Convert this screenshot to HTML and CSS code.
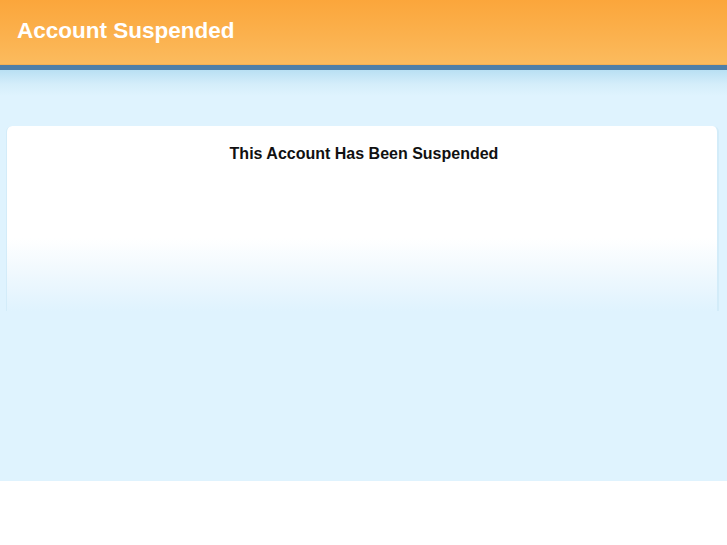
FILE: index.html
```html
<!DOCTYPE html>
<html lang="en">
<head>
    <meta charset="UTF-8">
    <title>Account Suspended</title>
    <link rel="stylesheet" href="styles.css">
</head>
<body>
    <div class="page">
        <div class="header">
            <h1 class="header-title">Account Suspended</h1>
        </div>
        <div class="header-rule"></div>
        <div class="content">
            <div class="panel">
                <h2 class="panel-title">This Account Has Been Suspended</h2>
            </div>
        </div>
    </div>
</body>
</html>
```

FILE: styles.css
```css
* {
    margin: 0;
    padding: 0;
    box-sizing: border-box;
}

body {
    background-color: #fff;
    font-family: 'Liberation Sans', Arial, sans-serif;
}

.page {
    height: 481px;
    background-color: #dff3fe;
    display: flex;
    flex-direction: column;
}

.header {
    height: 65px;
    background: linear-gradient(to bottom, #fba63b 0%, #fbb24f 60%, #fbbb5e 100%);
    border-bottom: 1px solid #f3b055;
    padding: 18px 0 0 17px;
}

.header-title {
    color: #fff;
    font-size: 22.5px;
    font-weight: bold;
    line-height: 26px;
}

.header-rule {
    height: 5px;
    background-color: #4f7fa8;
}

.content {
    flex: 1;
    background: linear-gradient(to bottom, #b9e0f3 0px, #d4edfa 14px, #dff3fe 26px, #dff3fe 100%);
    padding: 56px 8px 0 6px;
}

.panel {
    height: 185px;
    border-radius: 6px 6px 0 0;
    border-left: 1px solid #d3ecf9;
    border-right: 2px solid #d3ecf9;
    background: linear-gradient(to bottom, #ffffff 0px, #ffffff 112px, #f3fafe 140px, #e6f5fe 170px, #dff3fe 185px);
    padding: 18px 0 0 4px;
}

.panel-title {
    text-align: center;
    color: #111;
    font-size: 16px;
    font-weight: bold;
    line-height: 20px;
}
```
